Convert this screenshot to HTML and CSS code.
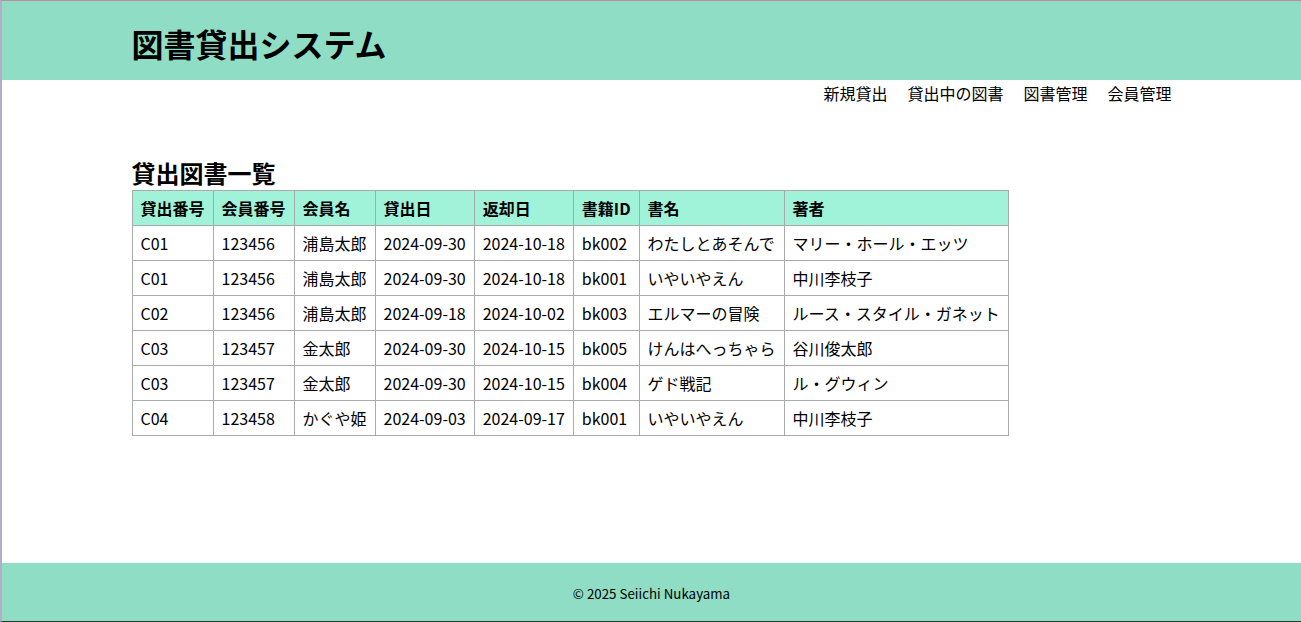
FILE: index.html
```html
<!DOCTYPE html>
<html lang="ja">
<head>
<meta charset="utf-8">
<title>図書貸出システム</title>
<link rel="stylesheet" href="styles.css">
</head>
<body>
<div class="page">
  <header class="site-header">
    <div class="container">
      <h1 class="site-title">図書貸出システム</h1>
    </div>
  </header>
  <nav class="container nav">
    <a href="#">新規貸出</a>
    <a href="#">貸出中の図書</a>
    <a href="#">図書管理</a>
    <a href="#">会員管理</a>
  </nav>
  <main class="container main">
    <h2 class="section-title">貸出図書一覧</h2>
    <table class="loans">
      <thead>
        <tr><th>貸出番号</th><th>会員番号</th><th>会員名</th><th>貸出日</th><th>返却日</th><th>書籍ID</th><th>書名</th><th>著者</th></tr>
      </thead>
      <tbody>
        <tr><td>C01</td><td>123456</td><td>浦島太郎</td><td>2024-09-30</td><td>2024-10-18</td><td>bk002</td><td>わたしとあそんで</td><td>マリー・ホール・エッツ</td></tr>
        <tr><td>C01</td><td>123456</td><td>浦島太郎</td><td>2024-09-30</td><td>2024-10-18</td><td>bk001</td><td>いやいやえん</td><td>中川李枝子</td></tr>
        <tr><td>C02</td><td>123456</td><td>浦島太郎</td><td>2024-09-18</td><td>2024-10-02</td><td>bk003</td><td>エルマーの冒険</td><td>ルース・スタイル・ガネット</td></tr>
        <tr><td>C03</td><td>123457</td><td>金太郎</td><td>2024-09-30</td><td>2024-10-15</td><td>bk005</td><td>けんはへっちゃら</td><td>谷川俊太郎</td></tr>
        <tr><td>C03</td><td>123457</td><td>金太郎</td><td>2024-09-30</td><td>2024-10-15</td><td>bk004</td><td>ゲド戦記</td><td>ル・グウィン</td></tr>
        <tr><td>C04</td><td>123458</td><td>かぐや姫</td><td>2024-09-03</td><td>2024-09-17</td><td>bk001</td><td>いやいやえん</td><td>中川李枝子</td></tr>
      </tbody>
    </table>
  </main>
  <footer class="site-footer">© 2025 Seiichi Nukayama</footer>
</div>
</body>
</html>
```
FILE: styles.css
```css
* { box-sizing: border-box; }
html, body { margin: 0; padding: 0; }
body {
  font-family: "Noto Sans CJK JP", "Noto Sans", sans-serif;
  color: #000;
  background: #fff;
}
.page {
  min-height: 100vh;
  display: flex;
  flex-direction: column;
  border-left: 2px solid #b4aec4;
  border-top: 1px solid #b8909c;
  border-bottom: 1px solid #333;
}
.container {
  width: 1040px;
  margin: 0 auto;
}
.site-header {
  background: #90ddc5;
  height: 79px;
  padding-top: 19px;
}
.site-title {
  margin: 0;
  font-size: 32px;
  font-weight: 700;
  line-height: 46px;
}
.nav {
  display: flex;
  justify-content: flex-end;
  gap: 20px;
  padding-top: 2px;
  line-height: 23px;
  font-size: 16px;
}
.nav a {
  color: #000;
  text-decoration: none;
}
.main {
  flex: 1;
}
.section-title {
  margin: 50px 0 0;
  font-size: 24px;
  line-height: 35px;
  font-weight: 700;
}
.loans {
  border-collapse: collapse;
  font-size: 16px;
}
.loans th, .loans td {
  border: 1px solid #aaa;
  padding: 6px 8px;
  line-height: 22px;
  text-align: left;
  white-space: nowrap;
}
.loans th {
  background: #a0f2d8;
  font-weight: 700;
}
.site-footer {
  background: #90ddc5;
  height: 58px;
  display: flex;
  align-items: center;
  justify-content: center;
  font-size: 13.33px;
  padding-top: 2px;
  margin-top: 60px;
}
```
